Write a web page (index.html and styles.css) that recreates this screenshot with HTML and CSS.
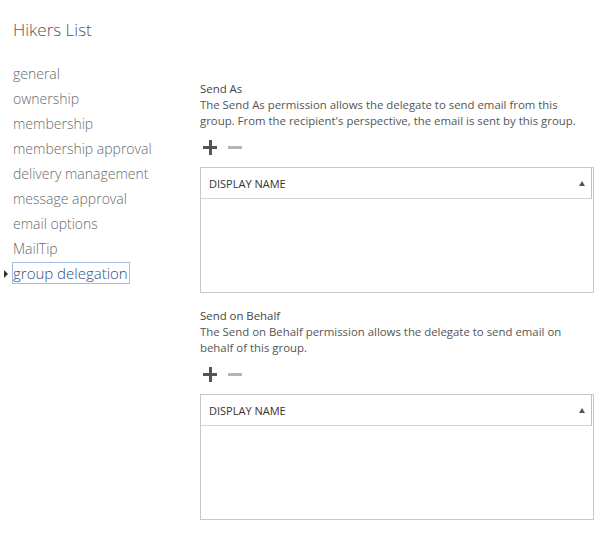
FILE: index.html
```html
<!DOCTYPE html>
<html lang="en">
<head>
  <meta charset="UTF-8" />
  <title>Hikers List</title>
  <link rel="stylesheet" href="styles.css">
</head>
<body>
  <h1 class="title">Hikers List</h1>
  <div class="layout">
    <ul class="nav">
      <li>general</li>
      <li>ownership</li>
      <li>membership</li>
      <li>membership approval</li>
      <li>delivery management</li>
      <li>message approval</li>
      <li>email options</li>
      <li>MailTip</li>
      <li class="selected"><span class="focus">group delegation</span></li>
    </ul>

    <div class="content">
      <div class="section">
        <div class="section-title">Send As</div>
        <p class="desc">The Send As permission allows the delegate to send email from this group. From the recipient's perspective, the email is sent by this group.</p>
        <div class="tools">
          <span class="icon-plus"></span>
          <span class="icon-minus"></span>
        </div>
        <div class="grid">
          <div class="grid-head">
            <span>DISPLAY NAME</span>
            <span class="sort"></span>
          </div>
          <div class="grid-body"></div>
        </div>
      </div>

      <div class="section">
        <div class="section-title">Send on Behalf</div>
        <p class="desc">The Send on Behalf permission allows the delegate to send email on behalf of this group.</p>
        <div class="tools">
          <span class="icon-plus"></span>
          <span class="icon-minus"></span>
        </div>
        <div class="grid">
          <div class="grid-head">
            <span>DISPLAY NAME</span>
            <span class="sort"></span>
          </div>
          <div class="grid-body"></div>
        </div>
      </div>
    </div>
  </div>
</body>
</html>
```

FILE: styles.css
```css
body {
  margin: 0;
  padding: 0;
  background: #fff;
  font-family: "Segoe UI", "Open Sans", sans-serif;
  color: #444;
}
.title {
  margin: 0;
  padding: 18px 0 0 13px;
  height: 43px;
  font-size: 17px;
  font-weight: 300;
  color: #555;
}
.layout {
  display: flex;
}
.nav {
  list-style: none;
  margin: 0;
  padding: 0;
  width: 200px;
}
.nav li {
  height: 25px;
  line-height: 25px;
  padding-left: 13px;
  font-size: 14px;
  font-weight: 300;
  color: #6a6a6a;
  position: relative;
}
.nav .selected {
  font-size: 15px;
  color: #2f4d7a;
}
.nav .selected::before {
  content: "";
  position: absolute;
  left: 4px;
  top: 9px;
  border-left: 4px solid #333;
  border-top: 4px solid transparent;
  border-bottom: 4px solid transparent;
}
.focus {
  margin-left: -1px;
  padding: 0 1px 0 0;
  border: 1px solid #9dbde6;
}
.content {
  width: 394px;
  padding-top: 19px;
}
.section {
  margin-bottom: 14px;
}
.section-title {
  font-size: 11.4px;
  line-height: 17px;
  color: #444;
}
.desc {
  margin: 0;
  font-size: 11.4px;
  line-height: 16px;
  color: #555;
}
.tools {
  display: flex;
  align-items: center;
  gap: 11px;
  height: 20px;
  margin: 8px 0 10px 3px;
}
.icon-plus {
  position: relative;
  width: 14px;
  height: 14px;
}
.icon-plus::before,
.icon-plus::after {
  content: "";
  position: absolute;
  background: #555;
}
.icon-plus::before {
  left: 0;
  top: 6px;
  width: 14px;
  height: 3px;
}
.icon-plus::after {
  left: 6px;
  top: 0;
  width: 3px;
  height: 15px;
}
.icon-minus {
  width: 14px;
  height: 3px;
  background: #b4b4b4;
}
.grid {
  border: 1px solid #c8c8c8;
  height: 124px;
}
.grid-head {
  display: flex;
  align-items: center;
  justify-content: space-between;
  height: 30px;
  padding: 0 8px;
  border-bottom: 1px solid #d4d4d4;
  border-right: 1px solid #c0c0c0;
  margin-right: 1px;
  font-size: 11px;
  color: #333;
}
.sort {
  width: 0;
  height: 0;
  border-left: 3px solid transparent;
  border-right: 3px solid transparent;
  border-bottom: 5px solid #555;
  margin-right: -2px;
}
```
